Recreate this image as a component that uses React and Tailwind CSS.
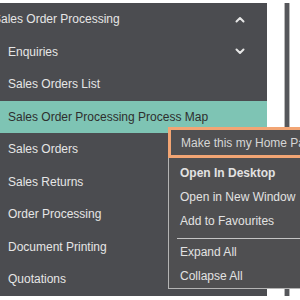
import React from 'react';

const items = [
    { label: 'Enquiries', chevron: 'down' },
    { label: 'Sales Orders List' },
    { label: 'Sales Order Processing Process Map', active: true },
    { label: 'Sales Orders' },
    { label: 'Sales Returns' },
    { label: 'Order Processing' },
    { label: 'Document Printing' },
    { label: 'Quotations' },
];

const Chevron = ({ up }) => (
    <svg width="10" height="7" viewBox="0 0 10 7" className="text-[#e6e6e6]">
        <path
            d={up ? 'M1.5 5.5 L5 2 L8.5 5.5' : 'M1.5 1.5 L5 5 L8.5 1.5'}
            fill="none"
            stroke="currentColor"
            strokeWidth="2"
            strokeLinecap="round"
            strokeLinejoin="round"
        />
    </svg>
);

const App = () => {
    return (
        <div className="relative w-[300px] h-[300px] overflow-hidden bg-white font-['Liberation_Sans',Arial,sans-serif] text-[12px]">
            <div className="flex h-full pt-[3px]">
                {/* Side menu */}
                <div className="w-[267px] h-[293px] bg-[#4b4c50]">
                    <div className="flex items-center justify-between h-[32.5px] pr-[22px]">
                        <span className="-ml-[7px] text-[#e6e6e6]">Sales Order Processing</span>
                        <Chevron up />
                    </div>
                    {items.map((item) => (
                        <div
                            key={item.label}
                            className={`flex items-center justify-between h-[32.5px] pl-[8px] pr-[22px] ${
                                item.active ? 'bg-[#7ec4b4] text-[#2e2e2e]' : 'text-[#e6e6e6]'
                            }`}
                        >
                            <span className="whitespace-nowrap">{item.label}</span>
                            {item.chevron && <Chevron />}
                        </div>
                    ))}
                </div>
                {/* Scrollbar strip */}
                <div className="ml-[17px] w-[6px] h-[293px] border-x border-[#b8b8b8] bg-[#56575b]"></div>
            </div>

            {/* Context menu */}
            <div className="absolute left-[168px] top-[127px] w-[150px] h-[162px] bg-[#4f4f51] border border-[#b4b4b4] text-[#e2e2e2]">
                <div className="-mt-px -ml-px h-[31px] border-[3px] border-[#f2a574] flex items-center pl-[10px] text-[#d6d6d6] whitespace-nowrap">
                    Make this my Home Page
                </div>
                <div className="pl-[11px] pt-[3px]">
                    <div className="h-[24px] flex items-center font-bold">Open In Desktop</div>
                    <div className="h-[24px] flex items-center">Open in New Window</div>
                    <div className="h-[24px] flex items-center">Add to Favourites</div>
                </div>
                <div className="ml-[8px] mt-[5px] h-px bg-[#c4c4c4]"></div>
                <div className="pl-[11px] pt-px">
                    <div className="h-[24px] flex items-center">Expand All</div>
                    <div className="h-[23px] flex items-center">Collapse All</div>
                </div>
            </div>
        </div>
    );
};

export default App;
